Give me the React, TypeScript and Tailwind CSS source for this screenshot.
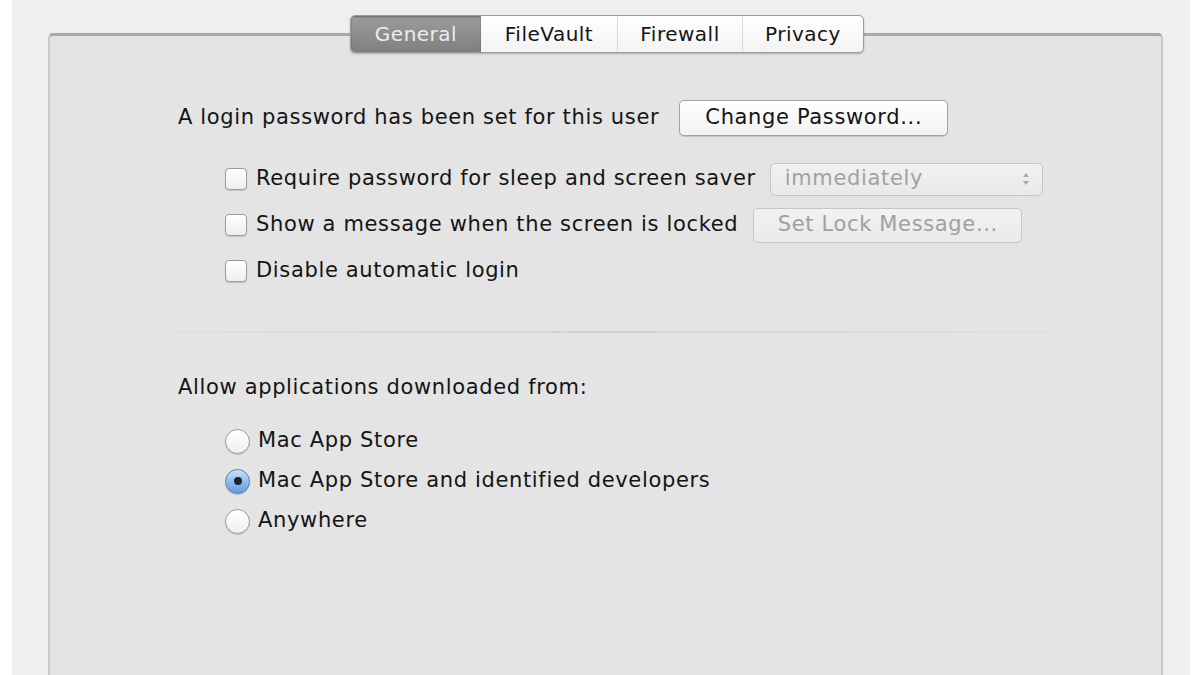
import React from "react";

const font = { fontFamily: '"DejaVu Sans", "Liberation Sans", sans-serif' };

function Checkbox() {
  return (
    <span className="mr-[9px] h-[22px] w-[22px] shrink-0 rounded-[4px] border border-[#9b9b9b] bg-gradient-to-b from-white to-[#eeeeee] shadow-[0_1px_1px_rgba(0,0,0,0.15)]" />
  );
}

function Radio({ checked }: { checked?: boolean }) {
  if (checked) {
    return (
      <span className="mr-[8px] flex h-[25px] w-[25px] shrink-0 items-center justify-center rounded-full border border-[#5b7fa6] bg-gradient-to-b from-[#cfe3f8] via-[#8dbdf0] to-[#5f9ddf] shadow-[0_1px_1px_rgba(0,0,0,0.2)]">
        <span className="h-[8px] w-[8px] rounded-full bg-[#1b2230]" />
      </span>
    );
  }
  return (
    <span className="mr-[8px] h-[25px] w-[25px] shrink-0 rounded-full border border-[#9b9b9b] bg-gradient-to-b from-white to-[#efefef] shadow-[0_1px_1px_rgba(0,0,0,0.15)]" />
  );
}

const tabs = [
  { label: "General", w: "w-[130px]", active: true },
  { label: "FileVault", w: "w-[136px]" },
  { label: "Firewall", w: "w-[125px]" },
  { label: "Privacy", w: "w-[121px]" },
];

export default function App() {
  return (
    <div className="h-[675px] w-[1200px] overflow-hidden bg-white pl-[12px] pr-[10px]" style={font}>
      <div className="h-full bg-[#eef0ef] pl-[36px] pr-[27px] pt-[33px]">
        <div className="relative h-[700px] rounded-t-[5px] border-x-2 border-t-[3px] border-x-[#c9c9c9] border-t-[#a9a9a9] bg-[#e4e4e4] text-[21px] tracking-[0.65px] text-[#141414]">
          {/* segmented tabs sitting on the top border */}
          <div className="absolute -top-[21px] left-[300px] flex h-[38px] overflow-hidden rounded-[5px] border border-[#9c9c9c] bg-gradient-to-b from-white to-[#f3f3f3] text-[20px] tracking-[0.5px] shadow-[0_1px_2px_rgba(0,0,0,0.25)]">
            {tabs.map((t, i) => (
              <div
                key={t.label}
                className={
                  t.active
                    ? `${t.w} flex items-center justify-center bg-gradient-to-b from-[#9c9c9c] to-[#808080] text-[#ececec] shadow-[inset_0_1px_2px_rgba(0,0,0,0.35)]`
                    : `${t.w} flex items-center justify-center ${i > 1 ? "border-l border-[#dadada]" : ""}`
                }
              >
                {t.label}
              </div>
            ))}
          </div>

          <div className="pt-[64px]">
            <div className="flex h-[36px] items-center pl-[128px]">
              <span>A login password has been set for this user</span>
              <button className="ml-[20px] h-[36px] w-[269px] rounded-[5px] border border-[#a3a3a3] bg-gradient-to-b from-white to-[#f2f2f2] shadow-[0_1px_1px_rgba(0,0,0,0.15)]">
                Change Password...
              </button>
            </div>

            <div className="mt-[20px] pl-[175px]">
              <div className="flex h-[46px] items-center">
                <Checkbox />
                <span>Require password for sleep and screen saver</span>
                <div className="ml-[14px] flex h-[33px] w-[273px] items-center justify-between rounded-[5px] border border-[#c6c6c6] bg-gradient-to-b from-[#f1f1f1] to-[#e9e9e9] pl-[14px] pr-[12px] text-[#a2a2a2]">
                  <span>immediately</span>
                  <svg width="8" height="14" viewBox="0 0 8 14">
                    <path d="M4 1 L7 5 H1 Z" fill="#a8a8a8" />
                    <path d="M4 13 L7 9 H1 Z" fill="#a8a8a8" />
                  </svg>
                </div>
              </div>
              <div className="flex h-[46px] items-center">
                <Checkbox />
                <span>Show a message when the screen is locked</span>
                <button className="ml-[15px] h-[35px] w-[269px] rounded-[5px] border border-[#c6c6c6] bg-gradient-to-b from-[#f2f2f2] to-[#eaeaea] text-[#a0a0a0]">
                  Set Lock Message...
                </button>
              </div>
              <div className="flex h-[46px] items-center">
                <Checkbox />
                <span>Disable automatic login</span>
              </div>
            </div>

            <div className="mx-[20px] mt-[37px] h-[2px] bg-gradient-to-r from-transparent via-[#d2d2d2] to-transparent" />

            <div className="mt-[43px] flex h-[24px] items-center pl-[128px]">
              Allow applications downloaded from:
            </div>

            <div className="mt-[21px] pl-[175px]">
              <div className="flex h-[40px] items-center">
                <Radio />
                <span>Mac App Store</span>
              </div>
              <div className="flex h-[40px] items-center">
                <Radio checked />
                <span>Mac App Store and identified developers</span>
              </div>
              <div className="flex h-[40px] items-center">
                <Radio />
                <span>Anywhere</span>
              </div>
            </div>
          </div>
        </div>
      </div>
    </div>
  );
}
